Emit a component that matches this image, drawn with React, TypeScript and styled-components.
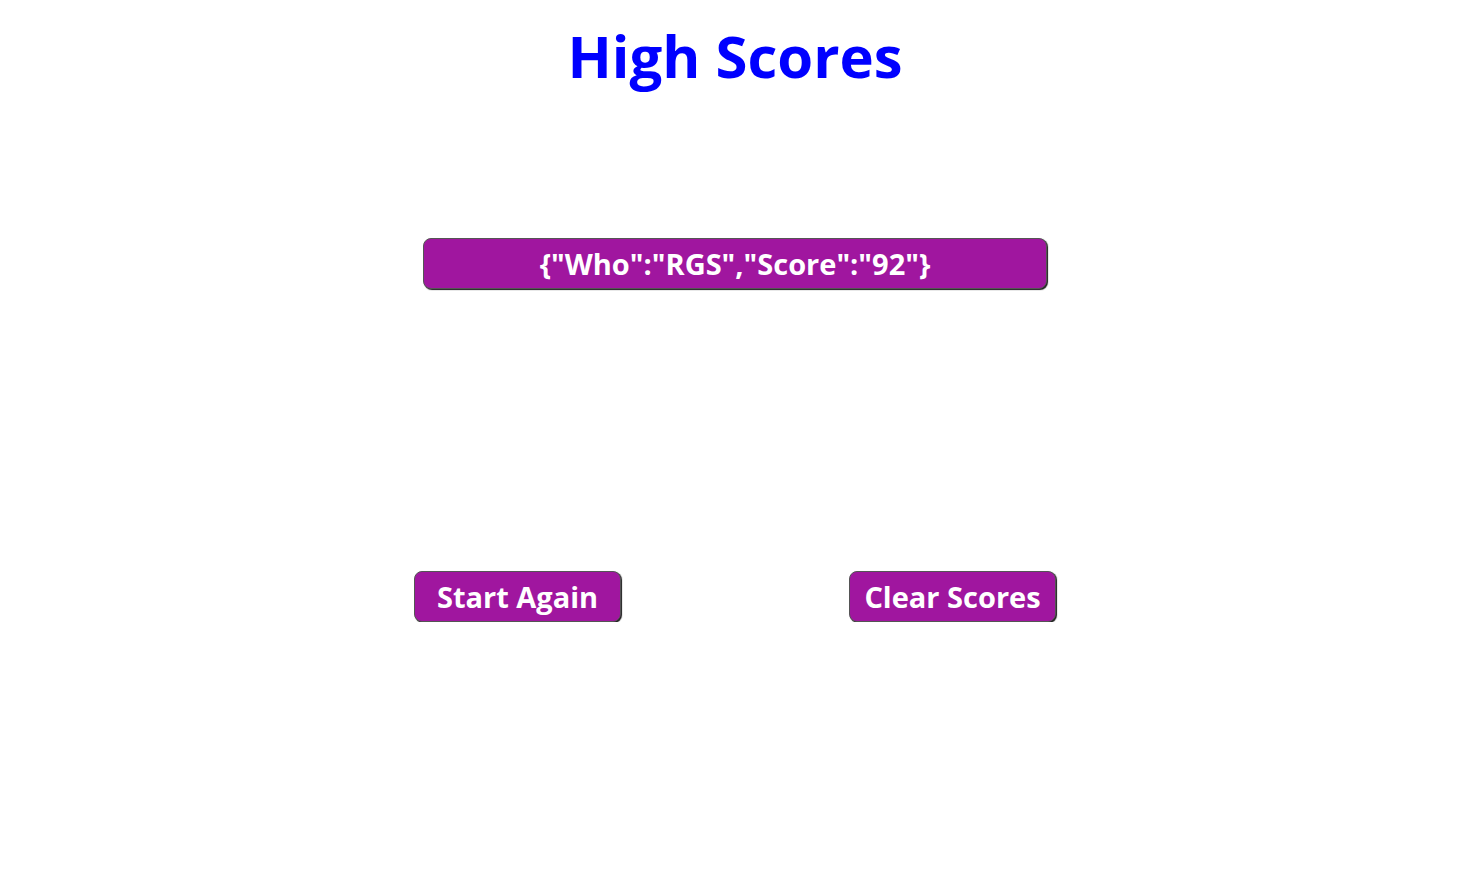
import React from "react";
import styled, { createGlobalStyle } from "styled-components";

const GlobalStyle = createGlobalStyle`
  html, body {
    margin: 0;
    padding: 0;
    background: #ffffff;
  }
  body {
    font-family: "Open Sans", "DejaVu Sans", sans-serif;
  }
`;

const Page = styled.div`
  width: 1470px;
  display: flex;
  flex-direction: column;
  align-items: center;
`;

const Title = styled.h1`
  margin: 18px 0 0;
  font-size: 58px;
  line-height: 76px;
  font-weight: 700;
  color: #0000ff;
`;

const ScoreList = styled.div`
  margin-top: 144px;
  display: flex;
  flex-direction: column;
  gap: 12px;
`;

const PurpleBox = styled.div`
  box-sizing: border-box;
  height: 51px;
  display: flex;
  align-items: center;
  justify-content: center;
  background: #a0169f;
  color: #ffffff;
  border: 1.5px solid #555555;
  border-radius: 8px;
  box-shadow: 1px 1px 1px #1a1a1a;
  font-weight: 700;
  font-size: 29px;
`;

const ScoreRow = styled(PurpleBox)`
  width: 624px;
`;

const ButtonRow = styled.div`
  margin-top: 282px;
  width: 642px;
  display: flex;
  justify-content: space-between;
`;

const ActionButton = styled(PurpleBox).attrs({ as: "button" })`
  width: 207px;
  padding: 0;
  font-family: inherit;
  cursor: pointer;
`;

const scores = [{ Who: "RGS", Score: "92" }];

export default function App(): JSX.Element {
  return (
    <>
      <GlobalStyle />
      <Page>
        <Title>High Scores</Title>
        <ScoreList>
          {scores.map((s) => (
            <ScoreRow key={s.Who}>{JSON.stringify(s)}</ScoreRow>
          ))}
        </ScoreList>
        <ButtonRow>
          <ActionButton>Start Again</ActionButton>
          <ActionButton>Clear Scores</ActionButton>
        </ButtonRow>
      </Page>
    </>
  );
}
